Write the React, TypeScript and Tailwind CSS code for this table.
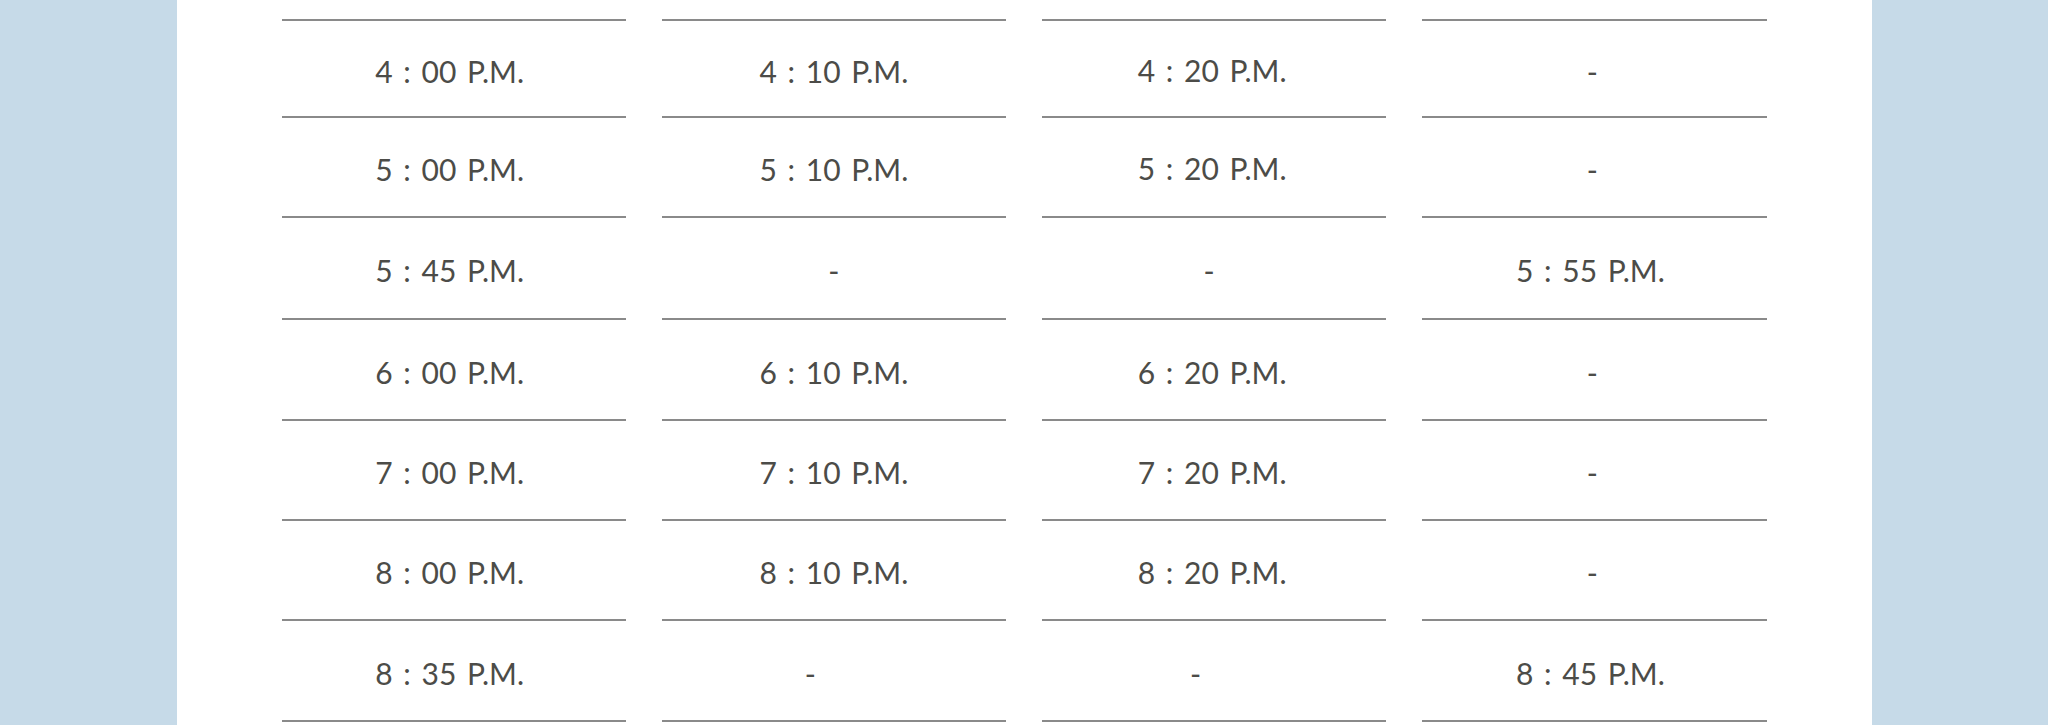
import React from "react";

type Cell = { t: string; cls?: string };

const rows: { h: string; cells: Cell[] }[] = [
  { h: "h-[97px]", cells: [{ t: "4 : 00 P.M." }, { t: "4 : 10 P.M." }, { t: "4 : 20 P.M.", cls: "-mt-[2px]" }, { t: "-", cls: "pr-[4px]" }] },
  { h: "h-[100px]", cells: [{ t: "5 : 00 P.M." }, { t: "5 : 10 P.M." }, { t: "5 : 20 P.M.", cls: "-mt-[2px]" }, { t: "-", cls: "pr-[4px]" }] },
  { h: "h-[102px]", cells: [{ t: "5 : 45 P.M." }, { t: "-" }, { t: "-", cls: "pr-[10px]" }, { t: "5 : 55 P.M." }] },
  { h: "h-[101px]", cells: [{ t: "6 : 00 P.M." }, { t: "6 : 10 P.M." }, { t: "6 : 20 P.M." }, { t: "-", cls: "pr-[4px]" }] },
  { h: "h-[100px]", cells: [{ t: "7 : 00 P.M." }, { t: "7 : 10 P.M." }, { t: "7 : 20 P.M." }, { t: "-", cls: "pr-[4px]" }] },
  { h: "h-[100px]", cells: [{ t: "8 : 00 P.M." }, { t: "8 : 10 P.M." }, { t: "8 : 20 P.M." }, { t: "-", cls: "pr-[4px]" }] },
  { h: "h-[101px]", cells: [{ t: "8 : 35 P.M." }, { t: "-", cls: "pr-[47px]" }, { t: "-", cls: "pr-[37px]" }, { t: "8 : 45 P.M." }] },
];

const colShift = ["pr-[8px]", "", "pr-[4px]", "pr-[8px]"];

export default function App() {
  return (
    <div className="w-[2048px] h-[725px] overflow-hidden bg-[#c6dae8] flex justify-center">
      <div className="w-[1695px] h-full bg-white px-[105px]">
        <div className="grid grid-cols-4 gap-x-[36px]">
          {[0, 1, 2, 3].map((i) => (
            <div key={i} className="h-[21px] border-b-2 border-[#8a8a8a]" />
          ))}
        </div>
        {rows.map((r, ri) => (
          <div key={ri} className="grid grid-cols-4 gap-x-[36px]">
            {r.cells.map((c, ci) => (
              <div
                key={ci}
                className={`${r.h} border-b-2 border-[#8a8a8a] flex items-center justify-center pt-[4px] ${c.t === "-" ? "" : colShift[ci]}`}
              >
                <span
                  className={`text-[30px] leading-none font-normal text-[#4c4c48] [word-spacing:3px] ${c.cls ?? ""}`}
                  style={{ fontFamily: "Lato, 'Noto Sans', sans-serif" }}
                >
                  {c.t}
                </span>
              </div>
            ))}
          </div>
        ))}
      </div>
    </div>
  );
}
